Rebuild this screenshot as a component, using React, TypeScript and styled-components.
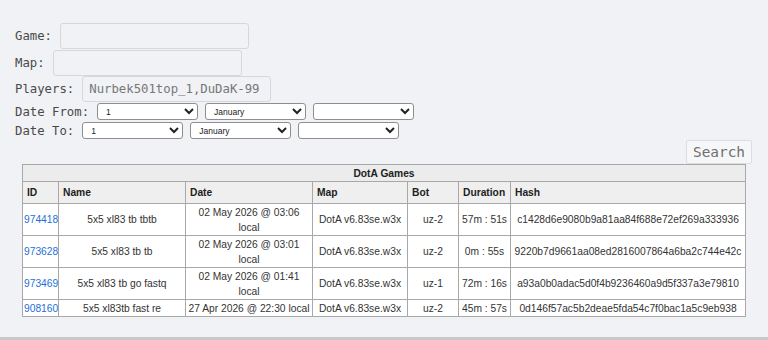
import React from 'react';
import styled, { createGlobalStyle } from 'styled-components';

const GlobalStyle = createGlobalStyle`
  body {
    margin: 0;
    background: #f0f2f5;
    font-family: 'DejaVu Sans Mono', monospace;
  }
`;

const Page = styled.div`
  box-sizing: border-box;
  height: 340px;
  padding-top: 23px;
  border-bottom: 3px solid #c6c8cc;
  background: #f0f2f5;
`;

const SearchForm = styled.form`
  padding-left: 15px;
  display: flex;
  flex-direction: column;
  gap: 0.5px;
`;

const Field = styled.div<{ $small?: boolean }>`
  display: flex;
  align-items: center;
  gap: 8px;
  height: ${(p) => (p.$small ? '18.5px' : '26px')};
`;

const Label = styled.label`
  font-family: 'DejaVu Sans Mono', monospace;
  font-size: 12.3px;
  color: #4a4a4a;
  white-space: pre;
`;

const TextInput = styled.input`
  box-sizing: border-box;
  width: 189px;
  height: 26px;
  padding: 0 6px;
  border: 1px solid #d6d7da;
  border-radius: 3px;
  background: transparent;
  font-family: 'DejaVu Sans Mono', monospace;
  font-size: 12.3px;
  color: #777;
  outline: none;
`;

const Selects = styled.div`
  display: flex;
  gap: 7px;
`;

const Select = styled.select`
  box-sizing: border-box;
  width: 101px;
  height: 17px;
  padding: 0 0 0 4px;
  border: 1px solid #8e8e8e;
  border-radius: 3px;
  background: #fff;
  font-family: 'Liberation Sans', Arial, sans-serif;
  font-size: 8.5px;
  color: #222;
`;

const ButtonRow = styled.div`
  display: flex;
  justify-content: flex-end;
  padding: 0 16px 0 0;
`;

const SearchButton = styled.button`
  box-sizing: border-box;
  width: 66px;
  height: 24px;
  padding: 0;
  border: 1px solid #dcdde0;
  border-radius: 2px;
  background: #f6f7f9;
  font-family: 'DejaVu Sans Mono', monospace;
  font-size: 14.4px;
  color: #6e6e6e;
`;

const TableWrap = styled.div`
  padding: 0 23px 0 22px;
`;

const Games = styled.table`
  width: 723px;
  table-layout: fixed;
  border-collapse: collapse;
  border: 1px solid #a8a8a8;
  font-family: 'Liberation Sans', Arial, sans-serif;
  font-size: 10.25px;
  line-height: 15px;
  color: #333;

  th,
  td {
    border: 1px solid #a8a8a8;
    overflow: hidden;
  }
`;

const TitleCell = styled.th`
  padding: 0.5px 0;
  background: #ececec;
  text-align: center;
  font-weight: bold;
  color: #222;
`;

const HeadCell = styled.th`
  padding: 3px 4px;
  background: #efefef;
  text-align: left;
  font-weight: bold;
  color: #222;
`;

const Cell = styled.td<{ $left?: boolean }>`
  padding: 0.5px 1px;
  background: #fff;
  text-align: ${(p) => (p.$left ? 'left' : 'center')};
  vertical-align: middle;
  white-space: ${(p) => (p.$left ? 'nowrap' : 'normal')};
`;

const IdLink = styled.a`
  color: #1f70d8;
  text-decoration: none;
`;

const days = Array.from({ length: 31 }, (_, i) => String(i + 1));
const months = [
  'January', 'February', 'March', 'April', 'May', 'June',
  'July', 'August', 'September', 'October', 'November', 'December',
];

const columns = [
  { name: 'ID', width: 36 },
  { name: 'Name', width: 127 },
  { name: 'Date', width: 127 },
  { name: 'Map', width: 95 },
  { name: 'Bot', width: 51 },
  { name: 'Duration', width: 52 },
  { name: 'Hash', width: 235 },
];

const games = [
  {
    id: '974418',
    name: '5x5 xl83 tb tbtb',
    date: '02 May 2026 @ 03:06 local',
    bot: 'uz-2',
    duration: '57m : 51s',
    hash: 'c1428d6e9080b9a81aa84f688e72ef269a333936',
  },
  {
    id: '973628',
    name: '5x5 xl83 tb tb',
    date: '02 May 2026 @ 03:01 local',
    bot: 'uz-2',
    duration: '0m : 55s',
    hash: '9220b7d9661aa08ed2816007864a6ba2c744e42c',
  },
  {
    id: '973469',
    name: '5x5 xl83 tb go fastq',
    date: '02 May 2026 @ 01:41 local',
    bot: 'uz-1',
    duration: '72m : 16s',
    hash: 'a93a0b0adac5d0f4b9236460a9d5f337a3e79810',
  },
  {
    id: '908160',
    name: '5x5 xl83tb fast re',
    date: '27 Apr 2026 @ 22:30 local',
    bot: 'uz-2',
    duration: '45m : 57s',
    hash: '0d146f57ac5b2deae5fda54c7f0bac1a5c9eb938',
  },
];

const DateSelects = () => (
  <Selects>
    <Select defaultValue="1">
      {days.map((d) => (
        <option key={d}>{d}</option>
      ))}
    </Select>
    <Select defaultValue="January">
      {months.map((m) => (
        <option key={m}>{m}</option>
      ))}
    </Select>
    <Select defaultValue="">
      <option value=""></option>
    </Select>
  </Selects>
);

const App = () => {
  return (
    <Page>
      <GlobalStyle />
      <SearchForm onSubmit={(e) => e.preventDefault()}>
        <Field>
          <Label>Game:</Label>
          <TextInput type="text" />
        </Field>
        <Field>
          <Label>Map:</Label>
          <TextInput type="text" />
        </Field>
        <Field>
          <Label>Players:</Label>
          <TextInput type="text" defaultValue="Nurbek501top_1,DuDaK-99" />
        </Field>
        <Field $small>
          <Label>Date From:</Label>
          <DateSelects />
        </Field>
        <Field $small>
          <Label>Date To:</Label>
          <DateSelects />
        </Field>
      </SearchForm>
      <ButtonRow>
        <SearchButton type="button">Search</SearchButton>
      </ButtonRow>
      <TableWrap>
        <Games>
          <colgroup>
            {columns.map((c) => (
              <col key={c.name} style={{ width: c.width }} />
            ))}
          </colgroup>
          <thead>
            <tr>
              <TitleCell colSpan={7}>DotA Games</TitleCell>
            </tr>
            <tr>
              {columns.map((c) => (
                <HeadCell key={c.name}>{c.name}</HeadCell>
              ))}
            </tr>
          </thead>
          <tbody>
            {games.map((g) => (
              <tr key={g.id}>
                <Cell $left>
                  <IdLink href="#">{g.id}</IdLink>
                </Cell>
                <Cell>{g.name}</Cell>
                <Cell>{g.date}</Cell>
                <Cell>DotA v6.83se.w3x</Cell>
                <Cell>{g.bot}</Cell>
                <Cell>{g.duration}</Cell>
                <Cell>{g.hash}</Cell>
              </tr>
            ))}
          </tbody>
        </Games>
      </TableWrap>
    </Page>
  );
};

export default App;
